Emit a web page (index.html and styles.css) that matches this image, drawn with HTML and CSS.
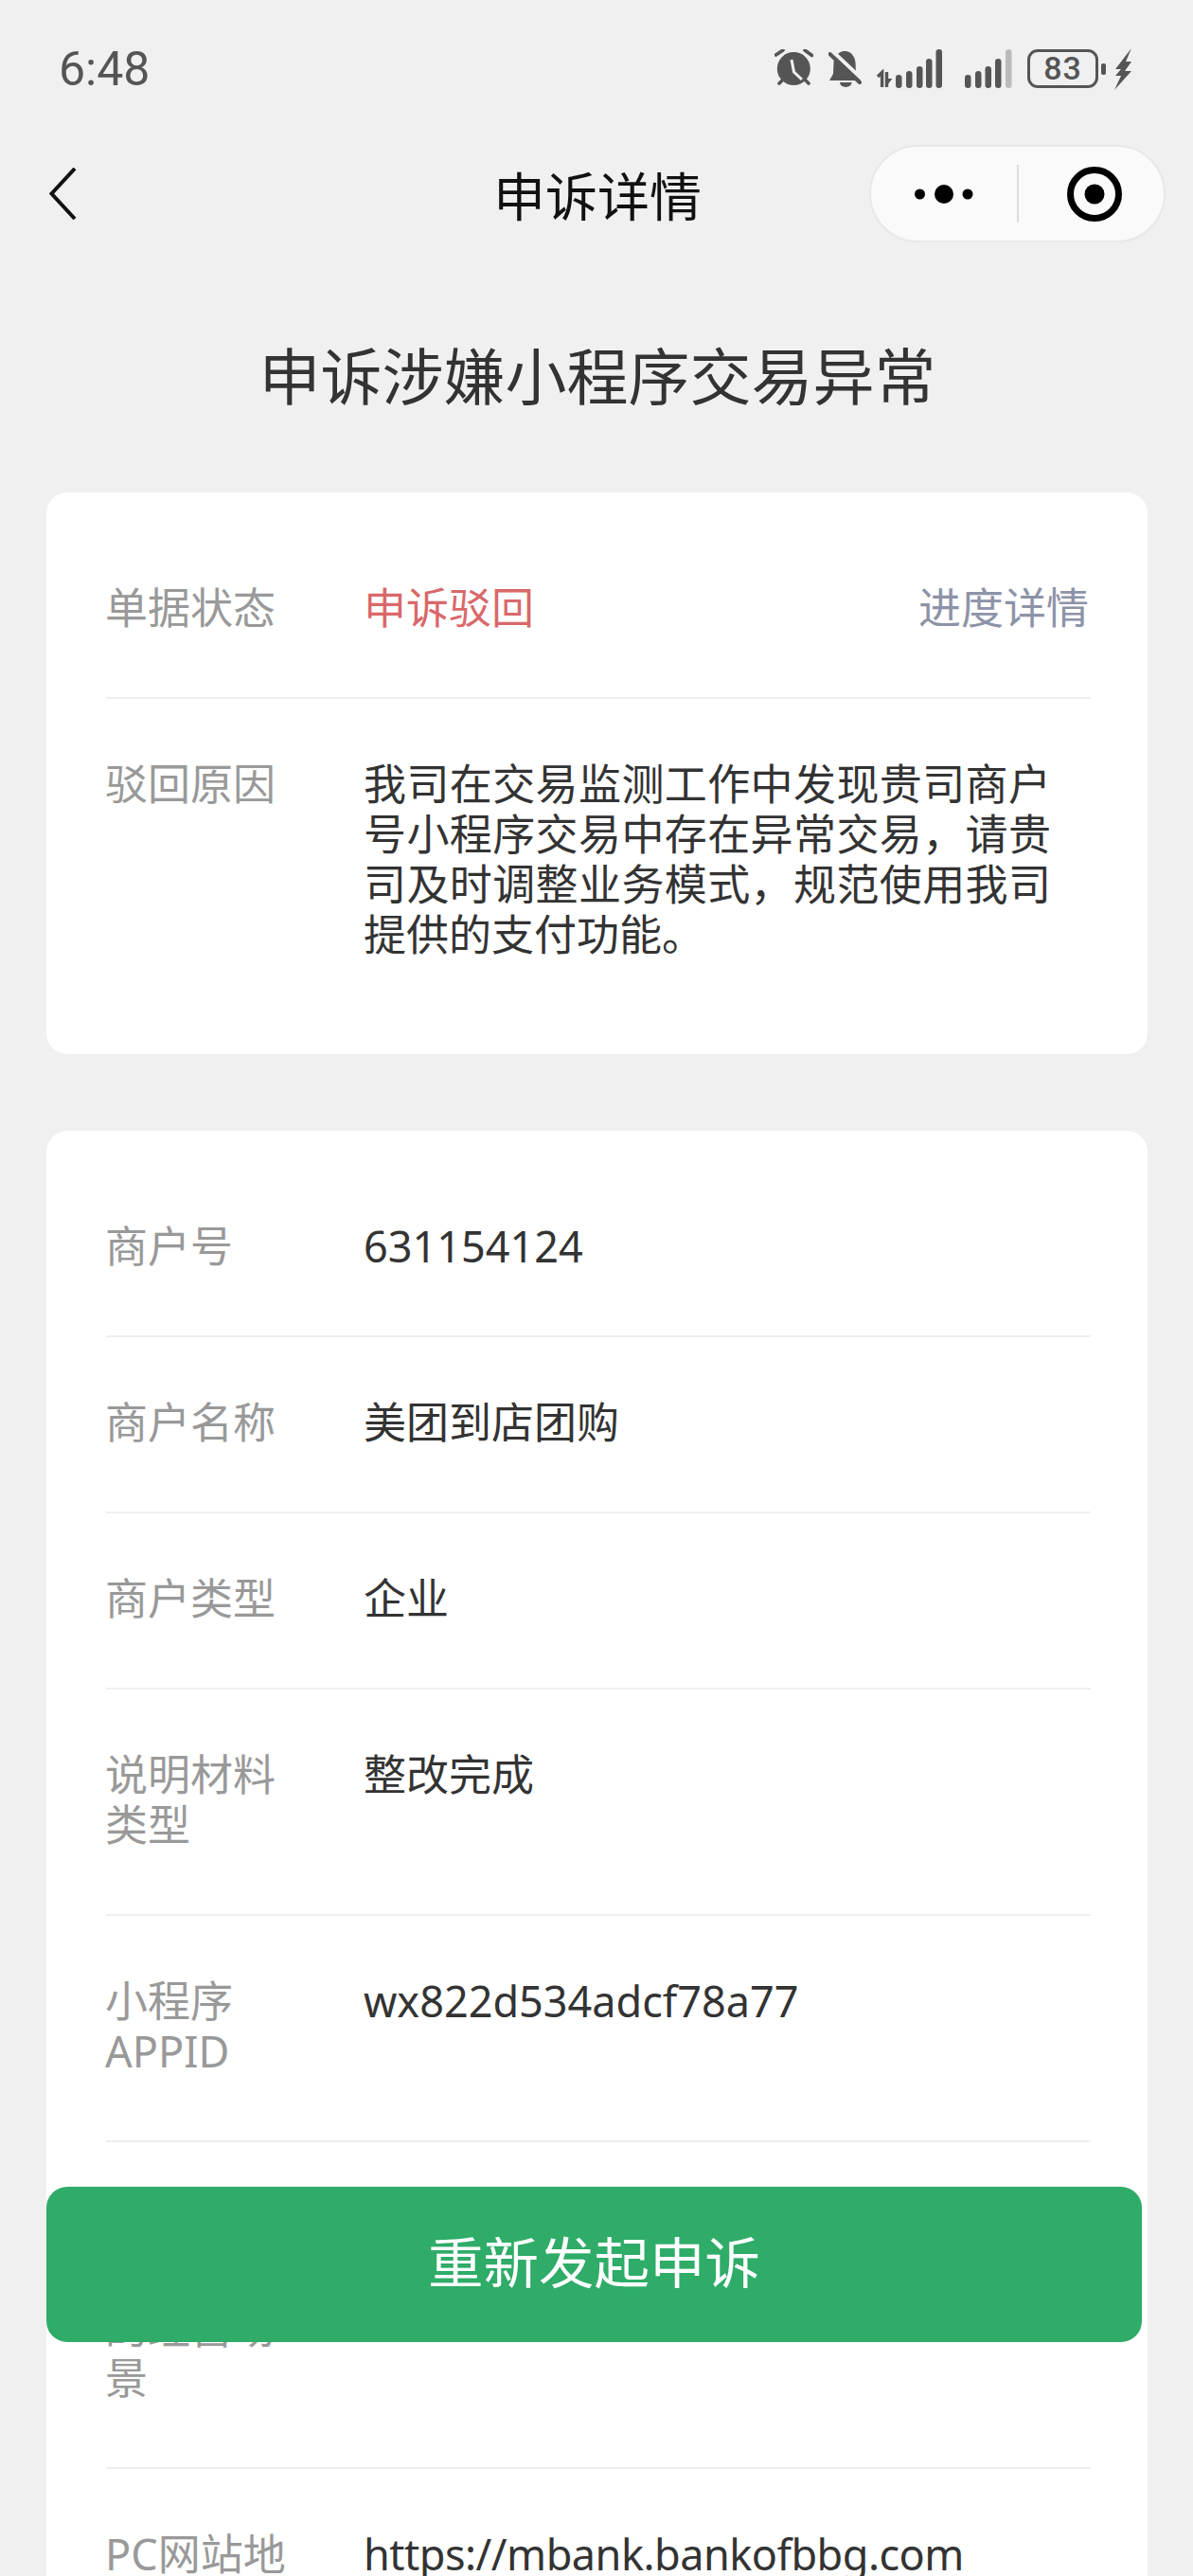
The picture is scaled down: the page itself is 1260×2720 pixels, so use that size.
FILE: index.html
```html
<!DOCTYPE html>
<html lang="zh-CN">
<head>
    <meta charset="UTF-8">
    <meta name="viewport" content="width=device-width, initial-scale=1.0">
    <title>申诉详情</title>
    <link rel="stylesheet" href="styles.css">
</head>
<body>

    <div class="status-bar">
        <span class="time">6:48</span>
        <div class="status-icons">
            <svg class="icon-alarm" width="41" height="41" viewBox="0 0 41 41">
                <circle cx="20.3" cy="20.5" r="17.5" fill="#555"/>
                <path d="M18 11 L20.5 24 L29 32" fill="none" stroke="#f0f0f0" stroke-width="3"/>
                <path d="M1.5 6 L9 1 M32 1 L39.5 6.5 M5 36 L9.5 31.5 M36 36 L31.5 31.5" stroke="#555" stroke-width="3.6" stroke-linecap="round"/>
            </svg>
            <svg class="icon-bell" width="35" height="40" viewBox="0 0 35 40">
                <path d="M16 1 C23 0 28 6 28.5 13 L29 24 L34 32 L1 32 L5 25 L5.5 13 C6 7 10 2 16 1 Z" fill="#555"/>
                <path d="M12 34 L24.5 34 C24 40.5 12.5 40.5 12 34 Z" fill="#555"/>
                <path d="M2 -1 L37 32" stroke="#f0f0f0" stroke-width="4"/>
                <path d="M1.5 4 L33 34" stroke="#555" stroke-width="4" stroke-linecap="round"/>
            </svg>
            <svg class="icon-signal" width="70" height="41" viewBox="0 0 70 41">
                <path d="M2 29 L6.6 24.5 L6.6 40" fill="none" stroke="#555" stroke-width="3.4"/>
                <path d="M11.5 24 L11.5 40" fill="none" stroke="#555" stroke-width="3.4"/>
                <path d="M11 31 L17.5 31 L11 39 Z" fill="#555"/>
                <rect x="21" y="27" width="6.5" height="14" rx="3.2" fill="#555"/>
                <rect x="32" y="23" width="6.5" height="18" rx="3.2" fill="#555"/>
                <rect x="43" y="18" width="6.5" height="23" rx="3.2" fill="#555"/>
                <rect x="53" y="10" width="6.5" height="31" rx="3.2" fill="#555"/>
                <rect x="63.5" y="0" width="6.5" height="41" rx="3.2" fill="#555"/>
            </svg>
            <svg class="icon-signal2" width="50" height="41" viewBox="0 0 50 41">
                <rect x="0" y="27" width="6.5" height="14" rx="3.2" fill="#555"/>
                <rect x="11" y="23" width="6.5" height="18" rx="3.2" fill="#555"/>
                <rect x="21.5" y="18" width="6.5" height="23" rx="3.2" fill="#555"/>
                <rect x="32" y="10" width="6.5" height="31" rx="3.2" fill="#555"/>
                <rect x="43" y="0" width="6.5" height="41" rx="3.2" fill="#bbb"/>
            </svg>
            <div class="battery"><span class="battery-level">83</span></div>
            <span class="battery-nub"></span>
            <svg class="icon-bolt" width="20" height="44" viewBox="0 0 20 44">
                <path d="M19 0 L2 22 L8 22 L2 29 L8 29 L1 44 L19 24 L12 24 L19 14 L13 14 Z" fill="#555"/>
            </svg>
        </div>
    </div>

    <div class="nav">
        <div class="nav-left">
            <svg width="29" height="55" viewBox="0 0 29 55">
                <path d="M27 1 L2.5 27.5 L27 54" fill="none" stroke="#111" stroke-width="4"/>
            </svg>
        </div>
        <div class="nav-title">申诉详情</div>
        <div class="nav-right">
            <div class="capsule">
                <svg class="capsule-more" width="66" height="20" viewBox="0 0 66 20">
                    <circle cx="5.5" cy="10" r="5.5" fill="#000"/>
                    <circle cx="31" cy="10" r="10" fill="#000"/>
                    <circle cx="56" cy="10" r="5.5" fill="#000"/>
                </svg>
                <span class="capsule-line"></span>
                <svg class="capsule-close" width="58" height="58" viewBox="0 0 58 58">
                    <circle cx="29" cy="29" r="25.5" fill="none" stroke="#000" stroke-width="7"/>
                    <circle cx="29" cy="29" r="10.5" fill="#000"/>
                </svg>
            </div>
        </div>
    </div>

    <h1 class="page-title">申诉涉嫌小程序交易异常</h1>

    <div class="card">
        <div class="row">
            <div class="label">单据状态</div>
            <div class="value value-red">申诉驳回</div>
            <div class="link">进度详情</div>
        </div>
        <div class="row">
            <div class="label">驳回原因</div>
            <div class="value value-reason">我司在交易监测工作中发现贵司商户号小程序交易中存在异常交易，请贵司及时调整业务模式，规范使用我司提供的支付功能。</div>
        </div>
    </div>

    <div class="card">
        <div class="row">
            <div class="label">商户号</div>
            <div class="value">631154124</div>
        </div>
        <div class="row">
            <div class="label">商户名称</div>
            <div class="value">美团到店团购</div>
        </div>
        <div class="row">
            <div class="label">商户类型</div>
            <div class="value">企业</div>
        </div>
        <div class="row">
            <div class="label">说明材料类型</div>
            <div class="value">整改完成</div>
        </div>
        <div class="row">
            <div class="label">小程序APPID</div>
            <div class="value">wx822d534adcf78a77</div>
        </div>
        <div class="row">
            <div class="label">小程序<br>PC网站<br>的经营场<br>景</div>
            <div class="value"></div>
        </div>
        <div class="row">
            <div class="label">PC网站地址</div>
            <div class="value value-url">https://mbank.bankofbbg.com</div>
        </div>
    </div>

    <button class="button">重新发起申诉</button>

</body>
</html>
```

FILE: styles.css
```css
html, body {
    height: 2720px;
    overflow: hidden;
}
body {
    margin: 0;
    background-color: #f0f0f0;
    font-family: "Noto Sans", "Noto Sans CJK SC", sans-serif;
    color: #333;
}
.status-bar {
    display: flex;
    justify-content: space-between;
    align-items: center;
    height: 41px;
    padding: 52px 64px 0 62px;
}
.time {
    font-family: Roboto, sans-serif;
    font-size: 50px;
    color: #555;
}
.status-icons {
    display: flex;
    align-items: center;
}
.status-icons svg {
    display: block;
    flex: none;
}
.icon-bell {
    margin-left: 16px;
}
.icon-signal {
    margin-left: 15px;
}
.icon-signal2 {
    margin-left: 24px;
}
.battery {
    display: flex;
    align-items: center;
    justify-content: center;
    box-sizing: border-box;
    width: 75px;
    height: 41px;
    margin-left: 16px;
    border: 3px solid #555;
    border-radius: 11px;
}
.battery-level {
    font-family: Roboto, sans-serif;
    font-size: 34px;
    font-weight: 500;
    line-height: 33px;
    letter-spacing: 1px;
    color: #555;
}
.battery-nub {
    width: 5px;
    height: 12px;
    margin-left: 3px;
    border-radius: 2px;
    background-color: #555;
}
.icon-bolt {
    margin-left: 8px;
}
.nav {
    display: grid;
    grid-template-columns: 1fr auto 1fr;
    align-items: center;
    height: 103px;
    margin-top: 60px;
    padding: 0 29px 0 33px;
}
.nav-left svg {
    display: block;
    margin-left: 19px;
}
.nav-title {
    margin: -2px 2px 0 0;
    font-size: 55px;
    color: #111;
}
.nav-right {
    display: flex;
    justify-content: flex-end;
}
.capsule {
    display: flex;
    align-items: center;
    box-sizing: border-box;
    width: 313px;
    height: 103px;
    border: 2px solid #e8e8e8;
    border-radius: 52px;
    background-color: #fafafa;
}
.capsule-more {
    margin-left: 46px;
}
.capsule-line {
    width: 2px;
    height: 61px;
    margin-left: 42px;
    background-color: #ddd;
}
.capsule-close {
    margin-left: 51px;
}
.page-title {
    margin: 101px 0 0 2px;
    font-size: 65px;
    font-weight: normal;
    line-height: 80px;
    text-align: center;
    color: #333;
}
.card {
    margin: 83px 48px 0 49px;
    padding: 32px 60px 32px 63px;
    border-radius: 22px;
    background-color: #fff;
}
.card + .card {
    margin-top: 81px;
}
.row {
    display: flex;
    padding: 63px 0 68px;
    font-size: 45px;
    line-height: 53px;
    border-bottom: 2px solid #efefef;
}
.row:last-child {
    border-bottom: none;
}
.label {
    flex: none;
    width: 200px;
    margin: 0 73px 0 -1px;
    color: #999;
}
.value {
    flex: 1;
    color: #333;
}
.value-red {
    color: #d9686a;
}
.value-reason {
    flex: none;
    width: 726px;
    text-align: justify;
}
.value-url {
    letter-spacing: -0.5px;
}
.link {
    margin-right: 2px;
    color: #8d93a8;
}
.button {
    position: fixed;
    left: 49px;
    bottom: 247px;
    width: 1157px;
    height: 164px;
    padding: 0 0 12px;
    border: none;
    border-radius: 22px;
    background-color: #2eac68;
    color: #fff;
    font-family: "Noto Sans CJK SC", sans-serif;
    font-size: 58.5px;
}
```
